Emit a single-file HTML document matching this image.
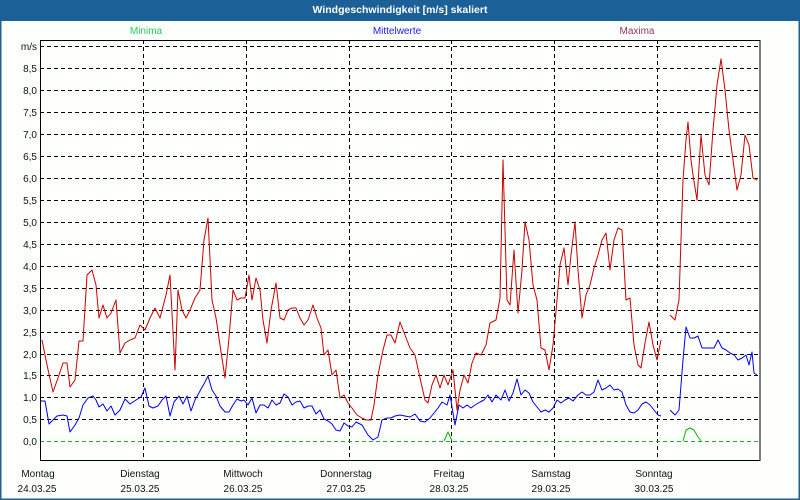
<!DOCTYPE html>
<html><head><meta charset="utf-8"><style>
html,body{margin:0;padding:0;background:#fff}
body{width:800px;height:500px;overflow:hidden}
svg{display:block}
svg text{font-family:"Liberation Sans",sans-serif;font-size:10px}
</style></head><body>
<svg width="800" height="500" viewBox="0 0 800 500" xmlns="http://www.w3.org/2000/svg">
<rect x="0" y="0" width="800" height="500" fill="#fdfffd"/>
<rect x="0" y="0" width="800" height="21" fill="#1c6098"/>
<rect x="0" y="0" width="1.5" height="500" fill="#1c6098"/>
<rect x="798.5" y="0" width="1.5" height="500" fill="#1c6098"/>
<rect x="0" y="498.5" width="800" height="1.5" fill="#1c6098"/>
<text x="400" y="13" fill="#fff" font-weight="bold" text-anchor="middle" style="font-size:10.5px">Windgeschwindigkeit [m/s] skaliert</text>
<text x="146" y="34" fill="#22cc55" text-anchor="middle">Minima</text>
<text x="397" y="34" fill="#2020ee" text-anchor="middle">Mittelwerte</text>
<text x="637" y="34" fill="#993366" text-anchor="middle">Maxima</text>
<g stroke="#000" stroke-width="1" stroke-dasharray="4,3" fill="none">
<path d="M40 46.5H760M40 68.5H760M40 90.5H760M40 112.5H760M40 134.5H760M40 156.5H760M40 178.5H760M40 200.5H760M40 222.5H760M40 244.5H760M40 266.5H760M40 288.5H760M40 310.5H760M40 332.5H760M40 354.5H760M40 375.5H760M40 397.5H760M40 419.5H760"/>
<path d="M143.5 40V460M246.5 40V460M349.5 40V460M451.5 40V460M554.5 40V460M657.5 40V460"/>
</g>
<path d="M40 441.5H760" stroke="#22aa22" stroke-dasharray="4,3"/>
<rect x="40.5" y="40.5" width="719.5" height="420" fill="none" stroke="#000"/>
<g fill="#111" text-anchor="end">
<text x="37" y="50">m/s</text><text x="37" y="72">8,5</text><text x="37" y="94">8,0</text><text x="37" y="116">7,5</text><text x="37" y="138">7,0</text><text x="37" y="160">6,5</text><text x="37" y="182">6,0</text><text x="37" y="204">5,5</text><text x="37" y="226">5,0</text><text x="37" y="248">4,5</text><text x="37" y="270">4,0</text><text x="37" y="292">3,5</text><text x="37" y="314">3,0</text><text x="37" y="336">2,5</text><text x="37" y="358">2,0</text><text x="37" y="379">1,5</text><text x="37" y="401">1,0</text><text x="37" y="423">0,5</text><text x="37" y="445">0,0</text>
</g>
<g fill="#111" text-anchor="middle">
<text x="38" y="477">Montag</text><text x="37" y="492">24.03.25</text>
<text x="140" y="477">Dienstag</text><text x="140" y="492">25.03.25</text>
<text x="243" y="477">Mittwoch</text><text x="243" y="492">26.03.25</text>
<text x="346" y="477">Donnerstag</text><text x="346" y="492">27.03.25</text>
<text x="449" y="477">Freitag</text><text x="449" y="492">28.03.25</text>
<text x="551" y="477">Samstag</text><text x="551" y="492">29.03.25</text>
<text x="654" y="477">Sonntag</text><text x="654" y="492">30.03.25</text>
</g>
<g fill="none" stroke-width="1" stroke-linejoin="round">
<polyline stroke="#cc0000" points="42,340 47,365 53,392 58,378 63,363 67,363 70,387 75,380 79,341 83,341 87,275 92,270 96,285 99,318 103,305 107,318 111,313 116,300 120,353 125,343 130,340 135,338 140,325 145,330 150,318 155,308 160,318 166,295 170,275 175,370 178,290 182,310 186,318 190,310 195,298 200,290 204,240 208,218 212,300 216,318 220,345 225,378 229,338 233,290 237,300 241,298 245,298 249,275 252,300 256,278 260,290 263,320 267,343 271,310 276,283 280,318 284,320 288,310 292,308 296,308 300,318 304,325 308,320 313,305 317,318 321,328 324,355 328,350 332,375 336,370 340,398 344,395 348,403 352,408 357,415 362,418 366,420 371,420 374,405 378,375 383,350 387,335 391,335 395,343 400,322 405,335 410,348 415,355 420,378 425,400 428,403 432,385 436,375 440,388 444,375 448,385 453,370 457,410 460,390 464,375 468,383 472,363 476,353 481,355 486,345 490,323 496,320 500,298 503,160 507,300 510,305 514,250 518,313 522,270 525,222 529,240 533,285 537,300 541,348 545,350 549,370 553,345 557,300 560,265 564,248 568,285 571,255 575,222 578,270 582,318 586,295 590,285 594,268 598,255 602,240 606,233 610,270 614,240 618,228 622,230 626,300 630,298 634,345 638,365 641,368 645,343 649,322 653,345 657,360 661,340"/>
<polyline stroke="#cc0000" points="670,315 675,320 679,300 683,180 686,140 688,122 691,160 693,175 697,200 701,135 705,175 709,185 713,130 717,85 721,59 725,90 729,130 733,160 737,190 741,175 745,135 749,145 753,178 757,180"/>
<polyline stroke="#0000ee" points="41,401 45,401 49,424 53,420 57,416 63,415 67,416 70,432 75,425 79,418 83,405 88,398 93,396 96,400 99,407 103,404 107,411 111,406 115,415 120,410 125,399 130,404 136,400 141,397 145,388 149,406 153,408 158,406 162,400 166,396 170,416 174,402 179,396 183,404 187,396 191,411 195,400 200,391 205,382 208,376 212,390 216,396 220,406 225,412 229,412 233,405 237,399 241,401 244,400 248,405 252,398 256,413 260,405 264,405 268,408 272,400 276,405 280,403 284,394 288,397 292,405 296,402 300,401 304,408 308,406 312,406 316,414 320,410 324,419 328,421 332,424 336,430 340,431 344,423 348,426 352,427 356,422 362,425 368,435 373,440 378,437 382,420 387,418 391,418 395,416 400,415 405,416 410,417 415,414 420,421 425,422 430,418 434,413 438,408 442,402 447,405 450,395 455,425 459,405 463,408 467,405 471,408 475,405 480,402 484,400 488,395 492,402 496,395 501,400 505,390 509,401 513,393 517,379 521,395 525,390 529,393 533,402 537,407 541,412 545,410 549,412 553,408 557,400 561,403 565,400 569,398 573,401 578,395 582,392 586,395 590,395 594,392 598,380 602,390 606,388 610,385 614,390 618,389 622,392 626,405 630,412 634,413 638,410 642,404 646,402 650,405 654,410 658,415 661,416"/>
<polyline stroke="#0000ee" points="670,410 675,415 679,410 683,360 686,327 690,338 694,338 698,336 702,348 706,348 710,348 714,348 718,340 722,348 726,350 730,353 734,355 738,360 742,358 746,355 749,365 752,352 754,373 757,375"/>
<polyline stroke="#00bb00" points="444,441 448,432 452,441"/>
<polyline stroke="#00bb00" points="683,441 686,430 690,428 694,430 698,437 701,441"/>
</g>
</svg>
</body></html>
